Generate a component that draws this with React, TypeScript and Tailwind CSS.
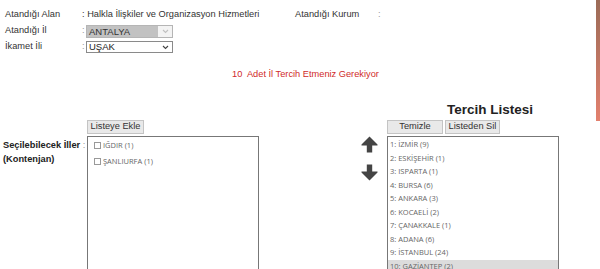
import React from "react";

const Chevron = ({ color }: { color: string }) => (
  <svg width="7" height="5" viewBox="0 0 7 5" className="block">
    <path d="M1 1 L3.5 3.5 L6 1" fill="none" stroke={color} strokeWidth="1.1" />
  </svg>
);

const ArrowUp = () => (
  <svg width="17" height="17" viewBox="0 0 17 17" className="block">
    <path d="M8.5 0.5 L16.5 8.5 L16.5 9.5 L11.2 9.5 L11.2 16.5 L5.8 16.5 L5.8 9.5 L0.5 9.5 L0.5 8.5 Z" fill="#444" />
  </svg>
);

const ArrowDown = () => (
  <svg width="17" height="17" viewBox="0 0 17 17" className="block">
    <path d="M8.5 16.5 L16.5 8.5 L16.5 7.5 L11.2 7.5 L11.2 0.5 L5.8 0.5 L5.8 7.5 L0.5 7.5 L0.5 8.5 Z" fill="#444" />
  </svg>
);

const prefs = [
  "1: İZMİR (9)",
  "2: ESKİŞEHİR (1)",
  "3: ISPARTA (1)",
  "4: BURSA (6)",
  "5: ANKARA (3)",
  "6: KOCAELİ (2)",
  "7: ÇANAKKALE (1)",
  "8: ADANA (6)",
  "9: İSTANBUL (24)",
  "10: GAZİANTEP (2)",
];

export default function App() {
  return (
    <div className="relative w-[600px] h-[269px] overflow-hidden bg-white font-['Liberation_Sans',Arial,sans-serif] text-[#333]">
      <div className="absolute right-0 top-0 w-[4px] h-[121px] bg-gradient-to-b from-[#9b6b57] to-[#e3806e]" />

      <div className="pl-[5px] pt-[7px] text-[9.25px]">
        {/* Row 1 */}
        <div className="flex items-center h-[15px]">
          <div className="w-[77px]">Atandığı Alan</div>
          <div className="w-[213px]">: Halkla İlişkiler ve Organizasyon Hizmetleri</div>
          <div className="w-[83px]">Atandığı Kurum</div>
          <div className="text-[#999]">:</div>
        </div>
        {/* Row 2 */}
        <div className="flex items-center h-[16px] mt-[1px]">
          <div className="w-[77px]">Atandığı İl</div>
          <div className="w-[4px] text-[#999]">:</div>
          <div className="flex h-[13px] w-[87px] border border-[#b5b5b5] bg-[#f3f3f3]">
            <div className="flex-1 bg-[#c2c2c2] pl-[2px] flex items-center text-[9.5px] leading-[11px] text-[#333]">ANTALYA</div>
            <div className="w-[14px] flex items-center justify-center">
              <Chevron color="#c0c0c0" />
            </div>
          </div>
        </div>
        {/* Row 3 */}
        <div className="flex items-center h-[16px]">
          <div className="w-[77px]">İkamet İli</div>
          <div className="w-[4px] text-[#999]">:</div>
          <div className="flex h-[12px] w-[87px] border border-[#8a8a8a] bg-white">
            <div className="flex-1 pl-[2px] flex items-center text-[9.5px] leading-[10px] text-[#222]">UŞAK</div>
            <div className="w-[14px] flex items-center justify-center">
              <Chevron color="#444" />
            </div>
          </div>
        </div>
      </div>

      {/* Red notice */}
      <div className="mt-[13px] h-[13px] flex items-center pl-[232px] text-[9.25px] text-[#d02a2a] whitespace-pre">
        10  Adet İl Tercih Etmeniz Gerekiyor
      </div>

      {/* Heading */}
      <div className="mt-[21px] h-[16px] flex items-center pl-[447px] text-[13.5px] font-bold text-[#222]">
        Tercih Listesi
      </div>

      {/* Buttons row */}
      <div className="mt-[2px] flex h-[14px] text-[9.25px] text-[#333]">
        <div className="ml-[87px] w-[57px] h-[14px] border border-[#c4c4c4] bg-[#e9e9e9] flex items-center justify-center">
          Listeye Ekle
        </div>
        <div className="ml-[243px] w-[56px] h-[14px] border border-[#c4c4c4] bg-[#e9e9e9] flex items-center justify-center">
          Temizle
        </div>
        <div className="ml-[2px] w-[55px] h-[14px] border border-[#c4c4c4] bg-[#e9e9e9] flex items-center justify-center">
          Listeden Sil
        </div>
      </div>

      {/* Lists row */}
      <div className="mt-[2px] flex">
        <div className="w-[87px] pl-[3px] pt-[2px] text-[9.25px] font-bold text-[#222] leading-[14px] whitespace-nowrap">
          <div>
            Seçilebilecek İller <span className="font-normal text-[#999]">:</span>
          </div>
          <div>(Kontenjan)</div>
        </div>
        <div className="w-[172px] h-[150px] border border-[#777] pl-[6px] pt-[5px] text-[7.5px] text-[#666] font-['Open_Sans',sans-serif]">
          <div className="flex items-center h-[7px] gap-[2px]">
            <div className="w-[7px] h-[7px] border border-[#999] bg-white" />
            <span>IĞDIR (1)</span>
          </div>
          <div className="flex items-center h-[7px] gap-[2px] mt-[9px]">
            <div className="w-[7px] h-[7px] border border-[#999] bg-white" />
            <span>ŞANLIURFA (1)</span>
          </div>
        </div>
        <div className="ml-[102px] w-[17px] flex flex-col">
          <ArrowUp />
          <div className="mt-[11px]">
            <ArrowDown />
          </div>
        </div>
        <div className="ml-[9px] w-[172px] h-[150px] border border-[#777] pt-[1px] text-[7.5px] text-[#666] font-['Open_Sans',sans-serif]">
          {prefs.map((p, i) => (
            <div
              key={p}
              className={
                i === 9
                  ? "h-[13.5px] flex items-center pl-[2px] bg-[#dcdcdc]"
                  : "h-[13.5px] flex items-center pl-[2px]"
              }
            >
              {p}
            </div>
          ))}
        </div>
      </div>
    </div>
  );
}
